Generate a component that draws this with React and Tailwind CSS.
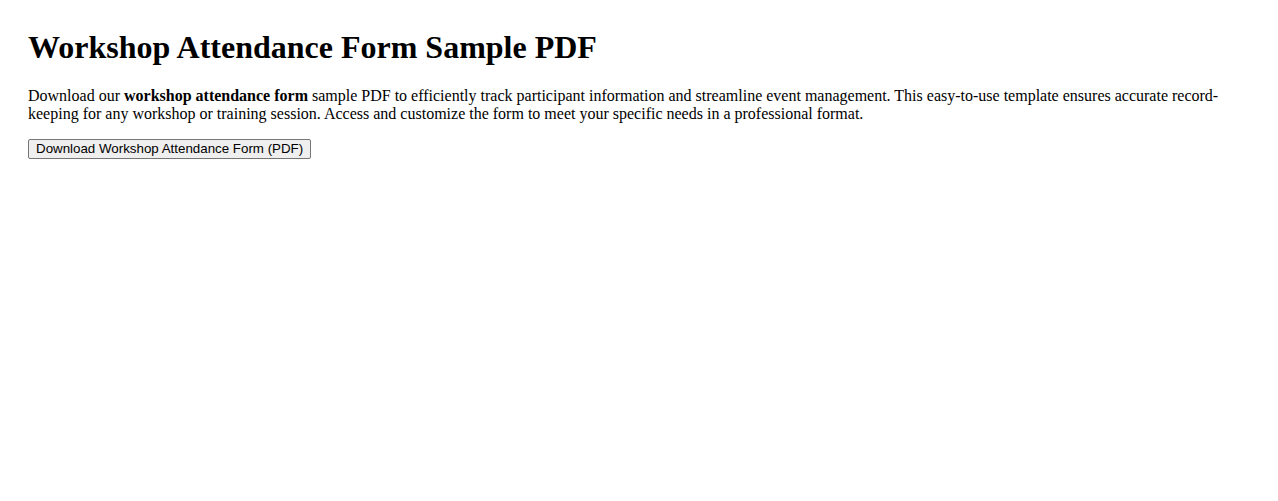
export default function App() {
  return (
    <div className="min-h-screen bg-white px-[28px] pt-[29px] text-black" style={{ fontFamily: '"Liberation Serif", "Times New Roman", serif' }}>
      <h1 className="text-[32px] font-bold leading-[37px]">Workshop Attendance Form Sample PDF</h1>
      <p className="mt-[21px] text-[16px] leading-[18px]">
        Download our <strong className="font-bold">workshop attendance form</strong> sample PDF to efficiently track participant information and streamline event management. This easy-to-use template ensures accurate record-keeping for any workshop or training session. Access and customize the form to meet your specific needs in a professional format.
      </p>
      <button
        type="button"
        className="mt-[16px] rounded-[2px] border border-[#767676] bg-[#efefef] px-[7px] py-[1px] text-[13.333px] leading-[16px] text-black hover:bg-[#e5e5e5]"
        style={{ fontFamily: '"Liberation Sans", Arial, sans-serif' }}
      >
        Download Workshop Attendance Form (PDF)
      </button>
    </div>
  );
}
